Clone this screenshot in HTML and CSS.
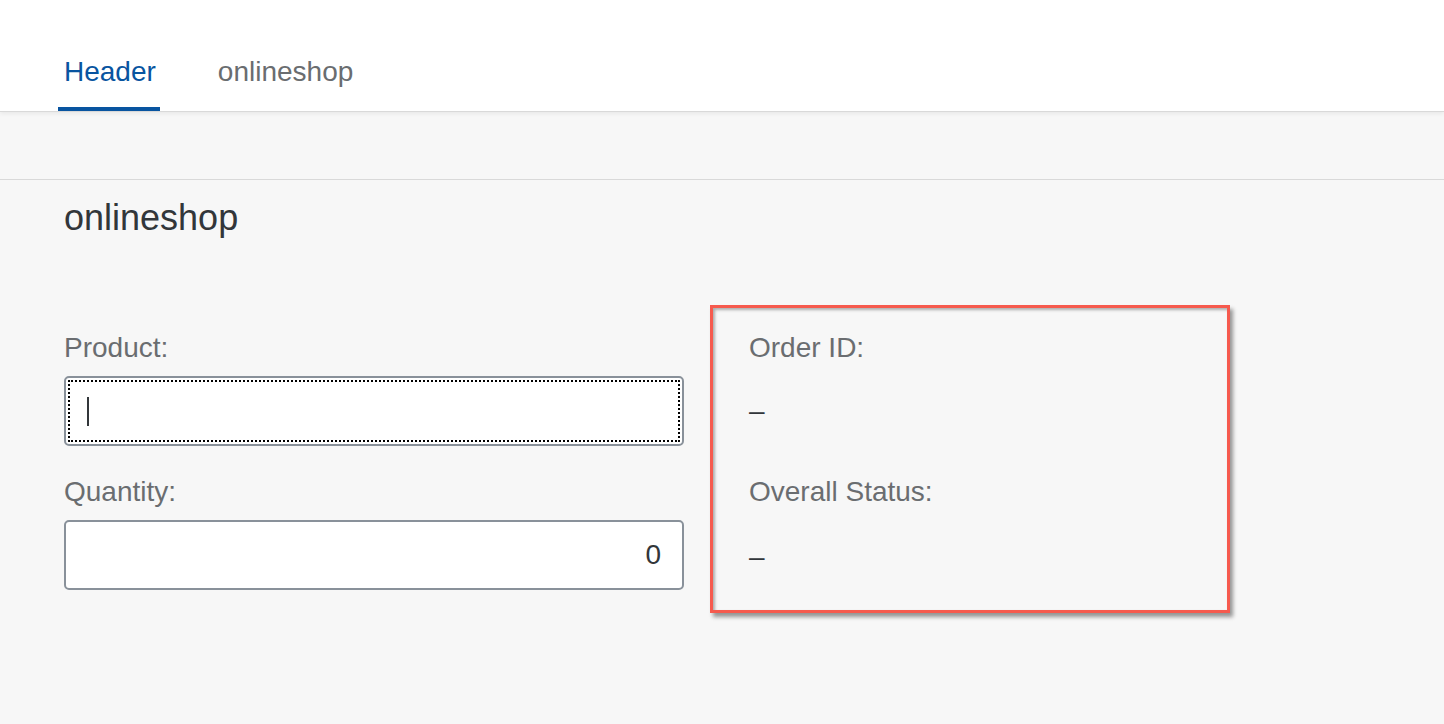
FILE: index.html
```html
<!DOCTYPE html>
<html>
<head>
<meta charset="utf-8">
<link rel="stylesheet" href="styles.css">
</head>
<body>
<header class="tabbar">
  <div class="tab tab-active">Header</div>
  <div class="tab">onlineshop</div>
</header>
<div class="spacer"></div>
<main class="page">
  <h1 class="title">onlineshop</h1>
  <div class="form">
    <div class="col-left">
      <div class="label">Product:</div>
      <div class="input input-focus"><span class="caret"></span></div>
      <div class="label label-second">Quantity:</div>
      <div class="input input-number">0</div>
    </div>
    <div class="col-right">
      <div class="label">Order ID:</div>
      <div class="value">–</div>
      <div class="label label-second-r">Overall Status:</div>
      <div class="value value-second">–</div>
    </div>
  </div>
</main>
</body>
</html>
```

FILE: styles.css
```css
html, body {
  margin: 0;
  padding: 0;
}
body {
  background: #f7f7f7;
  font-family: "Liberation Sans", Arial, sans-serif;
  color: #32363a;
  height: 724px;
  overflow: hidden;
}
.tabbar {
  height: 111px;
  background: #ffffff;
  border-bottom: 1px solid #d9d9d9;
  box-shadow: 0 2px 4px rgba(0, 0, 0, 0.06);
  display: flex;
  align-items: stretch;
  padding-left: 58px;
  box-sizing: content-box;
  position: relative;
}
.tab {
  font-size: 28px;
  color: #6a6d70;
  padding: 0 6px;
  display: flex;
  align-items: flex-start;
  padding-top: 56px;
  box-sizing: border-box;
  line-height: 32px;
}
.tab-active {
  color: #0854a0;
  border-bottom: 4px solid #0854a0;
  border-radius: 3px 3px 0 0;
  padding-right: 4px;
  margin-right: 52px;
}
.spacer {
  height: 67px;
  border-bottom: 1px solid #d9d9d9;
}
.page {
  padding: 0 64px;
}
.title {
  margin: 18px 0 0;
  font-size: 36px;
  font-weight: normal;
  line-height: 40px;
  color: #32363a;
}
.form {
  display: grid;
  grid-template-columns: 620px 520px;
  column-gap: 26px;
  align-items: start;
  margin-top: 67px;
}
.col-left {
  padding-top: 24px;
  display: flex;
  flex-direction: column;
}
.label {
  font-size: 28px;
  line-height: 38px;
  color: #6a6d70;
}
.label-second {
  margin-top: 27px;
}
.input {
  margin-top: 9px;
  height: 70px;
  box-sizing: border-box;
  background: #ffffff;
  border: 2px solid #89919a;
  border-radius: 5px;
  display: flex;
  align-items: center;
  font-size: 28px;
  color: #32363a;
  padding: 0 21px;
}
.input-focus {
  outline: 2px dotted #000000;
  outline-offset: -6px;
}
.caret {
  width: 2px;
  height: 29px;
  background: #32363a;
}
.input-number {
  justify-content: flex-end;
}
.col-right {
  border: 3px solid #f65a4e;
  padding: 21px 36px 37px;
  box-shadow: 3px 4px 4px rgba(0, 0, 0, 0.4), inset 2px 2px 3px rgba(0, 0, 0, 0.3);
  display: flex;
  flex-direction: column;
}
.value {
  margin-top: 28px;
  font-size: 28px;
  line-height: 32px;
  color: #32363a;
}
.value-second {
  margin-top: 30px;
}
.label-second-r {
  margin-top: 46px;
}
```
